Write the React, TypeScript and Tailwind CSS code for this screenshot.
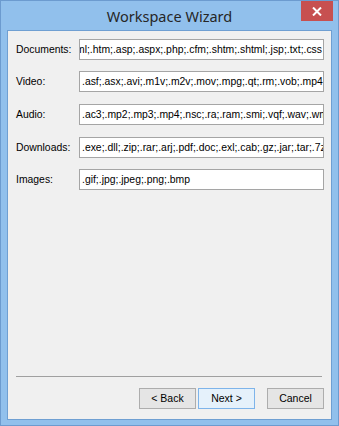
import React from "react";

const rows: { label: string; value: string; align: "start" | "end"; mt: string }[] = [
  {
    label: "Documents:",
    value:
      ".doc;.docx;.rtf;.odt;.xls;.xlsx;.ppt;.pptx;.pdf;.html;.htm;.asp;.aspx;.php;.cfm;.shtm;.shtml;.jsp;.txt;.css",
    align: "end",
    mt: "mt-[8px]",
  },
  {
    label: "Video:",
    value: ".asf;.asx;.avi;.m1v;.m2v;.mov;.mpg;.qt;.rm;.vob;.mp4;.wmv;.mkv",
    align: "start",
    mt: "mt-[11px]",
  },
  {
    label: "Audio:",
    value: ".ac3;.mp2;.mp3;.mp4;.nsc;.ra;.ram;.smi;.vqf;.wav;.wma;.ogg",
    align: "start",
    mt: "mt-[12px]",
  },
  {
    label: "Downloads:",
    value: ".exe;.dll;.zip;.rar;.arj;.pdf;.doc;.exl;.cab;.gz;.jar;.tar;.7z",
    align: "start",
    mt: "mt-[12px]",
  },
  {
    label: "Images:",
    value: ".gif;.jpg;.jpeg;.png;.bmp",
    align: "start",
    mt: "mt-[11px]",
  },
];

export default function App() {
  return (
    <div
      className="w-[339px] h-[426px] bg-[#91c0ec] border border-[#6c9bcf] flex flex-col text-black"
      style={{ fontFamily: '"Liberation Sans", Arial, sans-serif' }}
    >
      <div className="relative h-[29px] flex items-center justify-center shrink-0">
        <span
          className="text-[14.5px] text-[#262626] leading-none mt-[1px]"
          style={{ fontFamily: '"Noto Sans", "Open Sans", sans-serif' }}
        >
          Workspace Wizard
        </span>
        <div className="absolute right-[5px] top-0 w-[32px] h-[20px] bg-[#c75050] flex items-center justify-center">
          <svg width="10" height="9" viewBox="0 0 10 9">
            <path d="M1 0.5 L9 8.5 M9 0.5 L1 8.5" stroke="white" strokeWidth="2" />
          </svg>
        </div>
      </div>
      <div className="mx-[6px] h-[390px] border border-[#6f9fd2] bg-[#f0f0f0] flex flex-col text-[10.4px]">
        <div className="flex flex-col pl-[8px] pr-[7px]">
          {rows.map((r) => (
            <div key={r.label} className={`flex items-center h-[21px] ${r.mt}`}>
              <div className="w-[63px] shrink-0 whitespace-nowrap">{r.label}</div>
              <div
                className={`w-[245px] h-[21px] bg-white border border-[#a5a5a5] overflow-hidden flex items-center whitespace-nowrap pl-[2px] pr-[1px] ${
                  r.align === "end" ? "justify-end" : "justify-start"
                }`}
              >
                <span className="shrink-0">{r.value}</span>
              </div>
            </div>
          ))}
        </div>
        <div className="flex-1" />
        <div className="ml-[8px] mr-[9px] h-px bg-[#a0a0a0]" />
        <div className="flex items-center justify-end pr-[7px] mt-[11px] mb-[10px] text-[10.5px]">
          <div className="w-[57px] h-[21px] border border-[#adadad] bg-[#e5e5e5] flex items-center justify-center">
            &lt; Back
          </div>
          <div className="w-[57px] h-[21px] ml-[2px] border border-[#7eb4ea] bg-[#e5f1fb] flex items-center justify-center">
            Next &gt;
          </div>
          <div className="w-[57px] h-[21px] ml-[12px] border border-[#adadad] bg-[#e5e5e5] flex items-center justify-center">
            Cancel
          </div>
        </div>
      </div>
    </div>
  );
}
